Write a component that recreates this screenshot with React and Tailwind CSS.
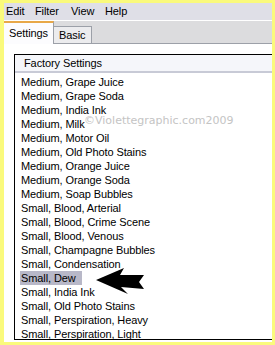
import React from 'react';

const items = [
  'Medium, Grape Juice',
  'Medium, Grape Soda',
  'Medium, India Ink',
  'Medium, Milk',
  'Medium, Motor Oil',
  'Medium, Old Photo Stains',
  'Medium, Orange Juice',
  'Medium, Orange Soda',
  'Medium, Soap Bubbles',
  'Small, Blood, Arterial',
  'Small, Blood, Crime Scene',
  'Small, Blood, Venous',
  'Small, Champagne Bubbles',
  'Small, Condensation',
  'Small, Dew',
  'Small, India Ink',
  'Small, Old Photo Stains',
  'Small, Perspiration, Heavy',
  'Small, Perspiration, Light',
];

function Arrow() {
  return (
    <svg
      className="absolute left-[94px] top-[266px]"
      width="52"
      height="30"
      viewBox="0 0 52 30"
    >
      <polygon
        points="2,14 30,2 26,9 50,9 45,16 50,23 27,21 34,28"
        fill="#000"
      />
    </svg>
  );
}

export default function App() {
  return (
    <div
      className="relative w-[275px] h-[345px] overflow-hidden bg-[#fafa7c] pt-[3px] pl-[4px] pr-[3px] pb-[3px] text-black tracking-[-0.1px]"
      style={{ fontFamily: '"Liberation Sans", Arial, sans-serif' }}
    >
      <div className="flex flex-col h-full bg-white">
        {/* menu bar */}
        <div className="flex h-[18px] items-center bg-[#dfdfe7] text-[11px] border-b border-white">
          <span className="ml-[2px] w-[29px]">Edit</span>
          <span className="w-[36px]">Filter</span>
          <span className="w-[34px]">View</span>
          <span>Help</span>
        </div>

        {/* tabs */}
        <div className="flex items-end h-[23px] bg-[#dcdcde] border-b border-[#9ca0a8] text-[11px]">
          <div className="relative z-10 -mb-px h-[23px] w-[50px] bg-[#fcfcfe] border-t-2 border-t-[#e8a848] border-r border-r-[#9ca0a8] pl-[5px] pt-[2px] leading-[16px]">
            Settings
          </div>
          <div className="h-[17px] w-[38px] bg-[#ececee] border-t border-r border-[#9ca0a8] pl-[5px] leading-[16px]">
            Basic
          </div>
        </div>

        {/* panel */}
        <div className="flex-1 pt-[10px] pl-[10px] min-h-0">
          <div className="h-[286px] border-t border-l border-b border-black overflow-hidden text-[11px]">
            <div className="h-[18px] bg-[#f5f6fa] border-b-2 border-[#c8cad6] pl-[9px] leading-[16px]">
              Factory Settings
            </div>
            <div className="pt-[2px] pl-[6px]">
              {items.map((item) => (
                <div key={item} className="h-[14px] leading-[14px] whitespace-nowrap">
                  {item === 'Small, Dew' ? (
                    <span className="inline-block -ml-[1px] pl-[1px] pr-[6px] bg-[#b8b8c8]">
                      {item}
                    </span>
                  ) : (
                    item
                  )}
                </div>
              ))}
            </div>
          </div>
        </div>
      </div>

      {/* watermark */}
      <span
        className="absolute left-[84px] top-[113px] text-[11px] tracking-normal text-[#c4c4c4]"
        style={{ fontFamily: '"DejaVu Sans", Verdana, sans-serif' }}
      >
        ©Violettegraphic.com2009
      </span>

      <Arrow />
    </div>
  );
}
